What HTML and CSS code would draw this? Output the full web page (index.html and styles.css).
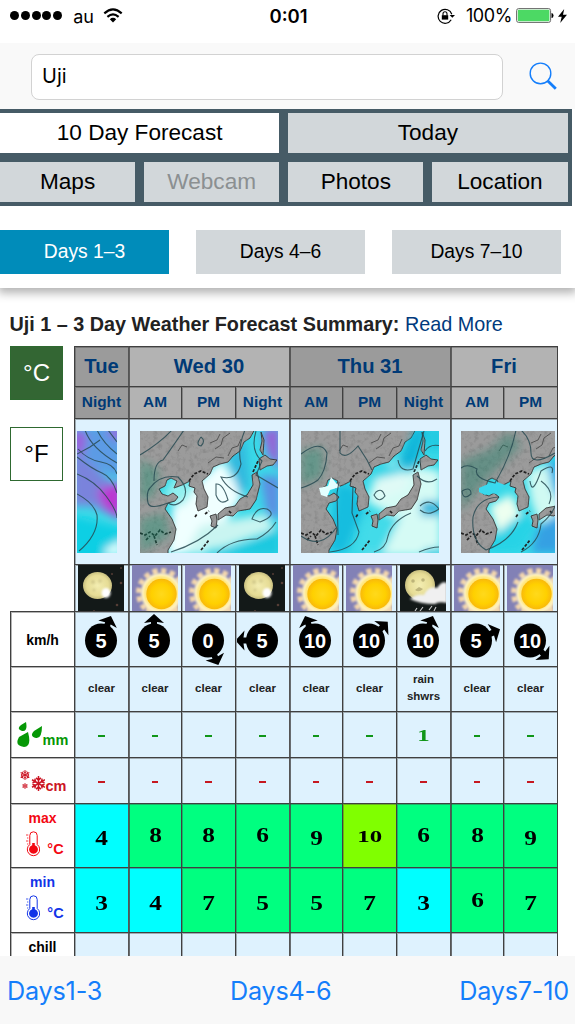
FILE: index.html
```html
<!DOCTYPE html>
<html lang="en">
<head>
<meta charset="utf-8">
<title>Uji weather forecast</title>
<link rel="stylesheet" href="styles.css">
</head>
<body>
<svg class="defs" width="0" height="0">
  <defs>
    <filter id="soft" x="-30%" y="-30%" width="160%" height="160%"><feGaussianBlur stdDeviation="4"/></filter>
    <filter id="edge" x="-30%" y="-30%" width="160%" height="160%"><feGaussianBlur stdDeviation="1.3"/></filter>
    <filter id="rough" x="0" y="0" width="100%" height="100%">
      <feTurbulence type="fractalNoise" baseFrequency=".22" numOctaves="4" seed="4"/>
      <feColorMatrix values="0 0 0 0 .2  0 0 0 0 .2  0 0 0 0 .2  1.5 0 0 0 -.68"/>
      <feComposite in2="SourceGraphic" operator="in" result="n"/>
      <feMerge><feMergeNode in="SourceGraphic"/><feMergeNode in="n"/></feMerge>
    </filter>
    <radialGradient id="sunfill"><stop offset="0" stop-color="#ffd91c"/><stop offset=".65" stop-color="#ffd000"/><stop offset="1" stop-color="#f9b90b"/></radialGradient>
    <radialGradient id="moonfill"><stop offset="0" stop-color="#f3edb1"/><stop offset=".75" stop-color="#e6dc95"/><stop offset="1" stop-color="#c8bf80"/></radialGradient>
    <symbol id="land" viewBox="0 0 138 122">
      <g fill="#9b9b9b" stroke="#303030" stroke-width=".9" filter="url(#rough)">
        <path d="M-2-2H115L110 7 104 11 100 20 93 25 88 31 80 33 73 36 70 43 62 50 64 58 68 66 67 76 58 80 56 73 57 65 54 61 55 57 49 55 50 50 42 54 34 57 37 50 31 47 27 49 25 55 19 58 22 63 28 65 33 62 38 66 35 70 28 72 25 78 32 88 36 98 34 109 28 119 28 124H-2Z"/>
        <path d="M70 85 76 83 77 89 76 97 71 95 72 90ZM78 83 85 77 95 75 100 68 107 64 113 54 112 44 117 41 120 53 116 69 110 78 98 80 93 85 86 84 78 89ZM119 28 125 24 130 28 137 29 133 34 127 35 120 39ZM121 1 124 9 123 24 120 19 122 10Z"/>
      </g>
      <path d="M0 102 5 104 10 101 15 105 20 99 25 103 31 101M14 105 17 114M6 109 10 105M61 119 65 114 69 109M55 86 57 83M65 83 69 80M89 80 92 83M113 41 118 30M49 50 54 43 61 40 68 43" fill="none" stroke="#222" stroke-width="1.7" stroke-dasharray="3 1.5"/>
      <path d="M75 18 81 14 83 7 90 2M88 25 92 17 98 15 101 8M70 12 77 9 80 3M68 32 76 26 84 27M38 20 42 14 47 16" fill="none" stroke="#555" stroke-width="1"/>
    </symbol>
    <symbol id="sun" viewBox="0 0 46 47">
      <path d="M0 0H46V47H0Z" fill="#8281b6"/>
      <path d="M14 47V36H36L46 14V47Z" fill="#efd7ac" filter="url(#edge)"/>
      <circle cx="29" cy="28" r="22" fill="none" stroke="#f3d6ae" stroke-width="6" stroke-dasharray="5 3.6" filter="url(#edge)"/>
      <circle cx="29" cy="28" r="20" fill="#fff3c4" filter="url(#edge)"/>
      <circle cx="29" cy="28" r="17" fill="#ffe678" filter="url(#edge)"/>
      <circle cx="29.5" cy="29" r="15.2" fill="url(#sunfill)"/>
    </symbol>
    <symbol id="moon" viewBox="0 0 46 47">
      <path d="M0 0H46V47H0Z" fill="#131918"/>
      <ellipse cx="19.5" cy="20.5" rx="14.5" ry="13.5" fill="url(#moonfill)"/>
      <ellipse cx="28" cy="28" rx="4.5" ry="5" fill="#fff" filter="url(#edge)"/>
      <g fill="#b8ae75" opacity=".5" filter="url(#edge)"><circle cx="15" cy="17" r="2"/><circle cx="22" cy="16" r="1.8"/><circle cx="16" cy="25" r="1.6"/></g>
      <g fill="#65463d" opacity=".8"><circle cx="34" cy="9" r="1"/><circle cx="43" cy="18" r="1.3"/><circle cx="39" cy="40" r="1.3"/><circle cx="16" cy="46" r="1"/><circle cx="43" cy="3" r="1"/></g>
    </symbol>
    <symbol id="moonrain" viewBox="0 0 46 47">
      <path d="M0 0H46V47H0Z" fill="#131918"/>
      <circle cx="20" cy="20" r="15" fill="url(#moonfill)"/>
      <g fill="#aaa16a" opacity=".7"><circle cx="13" cy="16" r="1.8"/><circle cx="23" cy="15" r="1.8"/><path d="M15 25Q19 28 23 24L19 22Z"/></g>
      <path d="M10 34Q16 29 24 30 29 20 37 23 42 15 47 18V38Q38 36 35 39 20 39 10 34Z" fill="#f0f0f0" filter="url(#edge)"/>
      <path d="M17 43 15 46M23 42 20 46M32 41 29 45M36 42 34 46" stroke="#ccc" stroke-width="1.1"/>
    </symbol>
    <symbol id="flake" viewBox="0 0 20 20"><g fill="none" stroke="currentColor" stroke-width="2"><g id="arm"><path d="M10 10V0M6.8 2.5 10 5.5 13.2 2.5"/></g><use href="#arm" transform="rotate(60 10 10)"/><use href="#arm" transform="rotate(120 10 10)"/><use href="#arm" transform="rotate(180 10 10)"/><use href="#arm" transform="rotate(240 10 10)"/><use href="#arm" transform="rotate(300 10 10)"/></g></symbol>
    <symbol id="thermo" viewBox="0 0 14 26"><g fill="none" stroke="currentColor"><path d="M3.8 13.5V4.5a3.7 3.7 0 0 1 7.4 0v9a6.2 6.2 0 1 1-7.4 0Z"/><path d="M0 4H2.3M1 7H2.3M0 10H2.3M1 13H2.3" stroke-width=".8"/></g><path d="M6.2 12h2.6v2.2a4.4 4.4 0 1 1-2.6 0Z" fill="currentColor"/></symbol>
  </defs>
</svg>

<header class="status">
  <div class="status-side">
    <span class="signal"><i></i><i></i><i></i><i></i><i></i></span>
    <span class="carrier">au</span>
    <svg class="wifi" width="20" height="15" viewBox="0 0 20 15"><g fill="none" stroke="#000" stroke-width="2.1"><path d="M1.3 5.4Q10-2.5 18.7 5.4M4.4 8.9Q10 3.9 15.6 8.9"/></g><path d="M6.8 11.2Q10 8.4 13.2 11.2L10 14.5Z"/></svg>
  </div>
  <span class="clock">0:01</span>
  <div class="status-side status-right">
    <svg width="18" height="16" viewBox="0 0 18 16"><path d="M14.2 11.8A7 7 0 1 1 14.8 6.2" fill="none" stroke="#000" stroke-width="1.2"/><path d="M12.6 7H18L15.3 9.8Z"/><path d="M4.8 7.2h6.4v4.4H4.8Z"/><path d="M6 7.6V5.8a2 2 0 0 1 4 0v1.8" fill="none" stroke="#000" stroke-width="1.1"/></svg>
    <span class="percent">100%</span>
    <svg class="battery" width="38" height="15" viewBox="0 0 38 15"><rect x=".6" y=".6" width="34" height="13.8" rx="2" fill="#fff" stroke="#666"/><rect x="1.8" y="1.8" width="31.6" height="11.4" rx=".8" fill="#4cd964"/><path d="M35.5 5q2 0 2 2.5t-2 2.5Z"/></svg>
    <svg width="9" height="14" viewBox="0 0 9 14"><path d="M6.2 0 0 7.8H3.7L2.2 14 9 5.8H5Z"/></svg>
  </div>
</header>

<div class="searchbar">
  <div class="search-field">Uji</div>
  <svg width="28" height="28" viewBox="0 0 28 28" fill="none" stroke="#147efb"><circle cx="11.5" cy="11.4" r="10.3" stroke-width="1.4"/><path d="M18.6 18.8 26.8 26.8" stroke-width="2.8"/></svg>
</div>

<main class="page">
  <nav class="tabs">
    <a class="wide active">10 Day Forecast</a><a class="wide">Today</a>
    <a>Maps</a><a class="off">Webcam</a><a>Photos</a><a>Location</a>
  </nav>
  <nav class="ranges"><a class="active">Days 1–3</a><a>Days 4–6</a><a>Days 7–10</a></nav>
  <h1 class="summary"><b>Uji 1 – 3 Day Weather Forecast Summary:</b> <a>Read More</a></h1>
  <section class="forecast" id="forecast">
    <div class="units"><span class="unit on">°C</span><span class="unit">°F</span></div>
  </section>
</main>

<footer class="toolbar"><a>Days1-3</a><a>Days4-6</a><a>Days7-10</a></footer>
<script src="forecast.js"></script>
</body>
</html>
```
FILE: styles.css
```css
* { box-sizing: border-box; }
body { margin: 0; height: 1024px; display: flex; flex-direction: column; overflow: hidden; background: #fff; color: #000; font-family: "Liberation Sans", Arial, sans-serif; }
.defs { position: absolute; }
svg { display: block; flex: none; }

.status { height: 43px; display: flex; align-items: center; padding: 0 8px 12px 10px; font: 18.5px Inter, sans-serif; }
.status-side { flex: 1; display: flex; align-items: center; }
.status-right { justify-content: flex-end; }
.signal { display: flex; gap: 1.8px; }
.signal i { width: 9px; height: 9px; border-radius: 50%; background: #000; }
.carrier { margin: 1px 9px 0 11px; font-size: 18px; }
.clock { font-weight: 600; font-size: 18.5px; }
.percent { margin: 0 4px 0 11px; font-size: 18px; letter-spacing: -.4px; }
.battery { margin-right: 4px; }

.searchbar { height: 66px; flex: none; display: flex; align-items: center; gap: 26px; padding: 0 18px 0 31px; background: #f9f9f9; }
.search-field { flex: none; width: 472px; height: 46px; margin-top: 2px; padding-left: 10px; border: 1px solid #d2d2d2; border-radius: 8px; background: #fff; font: 20px/43px Inter, sans-serif; }

.page { flex: 1; min-height: 0; overflow: hidden; }
.tabs { width: 572px; height: 97px; display: grid; grid-template-columns: repeat(4, 1fr); grid-template-rows: 40px 40px; gap: 9px; padding: 4px 4.5px 4px 0; background: #465b66; font-size: 22.6px; }
.tabs a { display: flex; align-items: center; justify-content: center; background: #d2d7da; }
.tabs .wide { grid-column: span 2; }
.tabs .active { background: #fff; }
.tabs .off { color: #8b8f91; }
.ranges { height: 82px; display: grid; grid-template-columns: repeat(3, 169px); gap: 27px; padding: 24px 0 14px; position: relative; box-shadow: 0 3px 9px 2px rgba(0,0,0,.3); clip-path: inset(0 0 -20px 0); background: #fff; font-size: 19.3px; }
.ranges a { display: flex; align-items: center; justify-content: center; background: #d2d7da; }
.ranges .active { background: #008cba; color: #fff; }
.summary { margin: 0; padding: 24px 0 0 9.5px; height: 58px; font-size: 19.8px; line-height: 24px; font-weight: 400; color: #222; white-space: nowrap; }
.summary a { color: #003a7d; }

.forecast { display: grid; margin-left: 10px; width: 548px; grid-template-columns: 64px 54px 53px 54px 54px 53px 54px 54px 53px 55px; grid-template-rows: 40px 32px 146px 47px 55px 45px 46px 46px 64px 65px 64px; }
.units { grid-area: 1 / 1 / 5 / 2; display: flex; flex-direction: column; gap: 27px; }
.unit { width: 53px; height: 54px; border: 1px solid #2e6930; display: flex; align-items: center; justify-content: center; font-size: 24px; }
.unit.on { background: #336633; color: #fff; }
.cell { border-top: 1px solid #404040; border-left: 1px solid #404040; box-shadow: inset 1px 1px rgba(64,64,64,.4); display: flex; align-items: center; justify-content: center; background: #def2fe; overflow: hidden; min-width: 0; }
.cell.last { border-right: 1px solid #404040; }
.cell.group { border-left-color: #555; box-shadow: inset 1px 0 rgba(64,64,64,.75), inset 0 1px rgba(64,64,64,.4); }
.day, .period { background: #b3b3b3; color: #003a76; font-weight: 700; font-size: 20.2px; }
.day.dark, .period.dark { background: #9b9b9b; }
.period { font-size: 15.4px; padding-bottom: 2px; }
.label { background: #fff; font-weight: 700; font-size: 14px; padding-top: 1px; }
.map { padding-bottom: 0; }
.map.left { justify-content: flex-start; padding-left: 2px; }
.map.right { justify-content: flex-end; padding-right: 2px; }
.sky { justify-content: flex-start; align-items: flex-start; padding-left: 3px; }
.text { font-weight: 700; font-size: 11.5px; line-height: 17px; text-align: center; padding-bottom: 2px; color: #222; }
.rain { color: #109618; }
.snow { color: #c61820; }
.dash { width: 6.5px; height: 2px; background: currentColor; margin-top: 3px; }
.number { font: 700 22px "Liberation Serif", serif; }
.number span { transform: scaleX(1.15); margin-bottom: 1px; }
.number .low { margin-top: 6px; }
.number .small { font-size: 17.5px; transform: scaleX(1.42); margin-top: 3px; }
.warm { background: #00ff80; }
.cool { background: #00ffff; }
.hot { background: #80ff00; }
.precip { gap: 1px; align-items: center; }
.precip span { font-size: 14.5px; margin-top: 10px; }
.temp { flex-direction: column; justify-content: flex-start; padding-top: 6px; }
.temp div { display: flex; align-items: center; gap: 7px; margin: 5px 0 0 5px; }
.temp div span { font-size: 14.5px; padding-top: 10px; }
.red { color: #f30812; }
.blue { color: #1234e8; }
.crimson { color: #cc1625; }
.green { color: #069806; }
.chill { align-items: flex-start; padding-top: 6px; }

.toolbar { height: 68px; flex: none; display: flex; justify-content: space-between; align-items: center; padding: 2px 6px 0 7px; background: #f8f8f8; color: #147efb; font: 25.2px Inter, sans-serif; letter-spacing: -.2px; }
```
FILE: forecast.js
```js
const root = document.getElementById('forecast');

function add(row, col, cls, html = '', span = 1) {
  const el = document.createElement('div');
  const edge = [3, 6, 9].includes(col) ? ' group' : '';
  el.className = 'cell ' + cls + edge + (col + span - 1 === 10 ? ' last' : '');
  el.style.gridArea = `${row} / ${col} / ${row + 1} / ${col + span}`;
  el.innerHTML = html;
  root.append(el);
}

add(1, 2, 'day dark', 'Tue');
add(1, 3, 'day', 'Wed 30', 3);
add(1, 6, 'day dark', 'Thu 31', 3);
add(1, 9, 'day', 'Fri', 2);
['Night', 'AM', 'PM', 'Night', 'AM', 'PM', 'Night', 'AM', 'PM'].forEach((p, i) =>
  add(2, i + 2, 'period' + (i === 0 || (i > 3 && i < 7) ? ' dark' : ''), p));

const chart = (width, sea, land, lines) => `<svg width="${width}" height="122" viewBox="0 0 ${width} 122">
  <path d="M0 0H138V122H0Z" fill="#39d9e8"/><g filter="url(#soft)">${sea}</g>${land}
  <g fill="none" stroke="#274a52" stroke-width="1.1" opacity=".85">${lines}</g></svg>`;
const ground = tint => `<use href="#land" width="138" height="122"/><g filter="url(#soft)" opacity=".4">${tint}</g>`;

add(3, 2, 'map left', chart(40,
  '<path d="M0-5H45V48L0 30Z" fill="#5c9be5"/><path d="M-5 20 10 30 45 60V90L15 75-5 75Z" fill="#7a83dc"/><path d="M20 60 45 50V88L28 78Z" fill="#bb38d2"/><path d="M-5-5 10 5 6 25-5 20ZM28 0 45-5V12Z" fill="#9c5ddc"/><path d="M-10 82 10 88 50 98V110L20 130H-10Z" fill="#10cfe4"/><path d="M28 118 45 108V125H28Z" fill="#dff"/>', '',
  '<path d="M8-1Q14 17 40 32M0 23 13 16 23 9M20-1Q26 12 40 23M31-1 40 11M0 26Q15 38 25 42T40 62M1 18Q11 29 24 31T40 43M0 43Q18 50 29 65T40 87M0 63Q17 72 20 84 22 103 2 120"/>'));

add(3, 3, 'map', chart(138,
  '<path d="M26 125 33 75 82 28 103 65 65 122Z" fill="#f0ffff"/><path d="M122 0 140-5V40L128 25Z" fill="#9565d6"/><path d="M88 30 105 5 110 55 100 65Z" fill="#31b9de"/><path d="M120 45H140V88L127 84Z" fill="#5c8fe2"/><path d="M85 90 125 83 135 98 85 116 45 122 60 95Z" fill="#c9f5f1"/><path d="M38 40 54 60 42 75 22 66Z" fill="#92f0ef"/><path d="M110 112 140 95V125H60Z" fill="#1fc9e0"/>',
  ground('<path d="M0 28 20 40 14 65 0 70ZM0 88 25 82 30 105 0 122Z" fill="#189271"/>'),
  '<path d="M44-1Q31 18 23 29 14 31 14 50M32-1Q20 12 0 24M61 6Q55 14 61 15 66 10 61 6M105-1Q97 18 101 33 97 50 81 46 88 60 108 66M116 0Q110 20 122 30L116 44 138 57M10 57Q20 43 38 46 50 58 43 69 35 77 28 72 10 79 8 72 6 61 10 57M76 53Q83 52 88 69 80 75 76 64ZM112 88Q117 75 127 78 138 84 120 91ZM31 121Q60 112 78 94M77 122Q91 108 117 108 130 101 136 91"/>'), 3);

add(3, 6, 'map', chart(138,
  '<path d="M75 45 90 30 140 40V125H65L92 85 65 70Z" fill="#d5fbf5"/><path d="M97 35 115-5 124 0 112 40Z" fill="#14add5"/><path d="M76 50 108 38 105 58 75 70Z" fill="#e0faf6"/><path d="M35 52 55 55 62 80 45 122 27 122Z" fill="#14bddf"/><path d="M65 50 85 35 105 32 100 42Z" fill="#2bd3e6"/><path d="M64 88 100 85 80 125 55 122Z" fill="#43dbe9"/><path d="M120 70H140V85H120Z" fill="#25b6dd"/><path d="M125-5H145V20H125ZM125 118H140V125H120Z" fill="#22cbe2"/>',
  ground('<path d="M0 20 22 16 22 45 0 55Z" fill="#138f72"/><path d="M100 42 112-5 124 2 110 42Z" fill="#06c0df"/>') + '<path d="m18 57 9-2 3-9 5 6 4 4-10 3-3 7-6-2Z" fill="#e3ffff"/>',
  '<path d="M39-1 39 22Q45 29 57 15L66 29 71 39M0 23Q20 8 26 22 25 40 17 49 10 54 0 57M97 29Q99 42 112 38 120 10 123 0M124 20Q129 12 140 15M75 61Q81 56 84 65 78 73 73 64ZM116 45Q126 55 136 48M38 51 36 62 37 104M52 55 51 82 58 101Q55 118 29 121M73 121Q85 118 87 105 91 90 110 82M119 75Q129 66 138 78 127 86 119 79M118 121Q130 116 138 116M0 105Q20 119 35 97"/>'), 3);

add(3, 9, 'map right', chart(94,
  '<path d="M65 40 100 30V85L78 92 70 70Z" fill="#d0faf3"/><path d="M28 75 50 63 60 82 39 112Z" fill="#edfff0"/><path d="M76 98 100 80V122H70Z" fill="#35a0e3"/><path d="M26 110 60 83 77 90 60 120 28 122Z" fill="#26d3e6"/><path d="M86 30H105V80L92 60Z" fill="#18ace6"/>',
  ground('<path d="M0 30 30 18 48 0 60 15 26 48 0 80Z" fill="#137f68"/>') + '<path d="m18 57 9-4 9-2 8 3-8 9-8-1-4 2-6-3Z" fill="#39d9ee"/>',
  '<path d="M55-1Q50 25 34 52 12 47 16 38 6 32 0 37M60-1Q70 8 70 22T94 22M69 50Q71 66 80 40 94 31 91 42M80 50Q94 60 88 73M38 66Q16 67 12 86 10 110 25 119 50 110 57 91M60 121Q78 112 80 93 91 84 94 75M1 60Q10 55 10 63 2 70 1 60"/>'), 2);

['moon', 'sun', 'sun', 'moon', 'sun', 'sun', 'moonrain', 'sun', 'sun'].forEach((s, i) =>
  add(4, i + 2, 'sky', `<svg width="46" height="47"><use href="#${s}" width="46" height="47"/></svg>`));

add(5, 1, 'label', 'km/h');
[[5, 22], [5, 0], [0, 157], [5, 270], [10, -22], [10, 45], [10, 22], [5, 65], [10, 135]].forEach(([speed, angle], i) =>
  add(5, i + 2, 'wind', `<svg width="52" height="54" viewBox="-25 -28.5 52 54"><ellipse rx="16" ry="17"/><path d="M0-26.5 10-17.5 3-18.5V-13H-3V-18.5L-10-17.5Z" transform="rotate(${angle})"/><text y="7.5" text-anchor="middle" fill="#fff" font-family="Liberation Sans" font-size="20" font-weight="700">${speed}</text></svg>`));

add(6, 1, 'label');
for (let i = 0; i < 9; i++) add(6, i + 2, 'text', i === 6 ? 'rain<br>shwrs' : 'clear');

add(7, 1, 'label precip green', '<svg width="25" height="26" viewBox="0 0 25 26" fill="currentColor"><path d="M9 0Q11 10 5 9-1 7 4 3ZM25 4Q25 17 19 16 12 14 17 9ZM11 10Q15 25 7 25-3 24 2 15ZM"/></svg><span>mm</span>');
add(8, 1, 'label precip crimson', '<svg width="26" height="24" viewBox="0 0 26 24"><use href="#flake" x="1" y="1" width="10" height="10"/><use href="#flake" x="3" y="14" width="6" height="6"/><use href="#flake" x="12" y="7" width="15" height="15"/></svg><span>cm</span>');
for (let i = 0; i < 9; i++) {
  add(7, i + 2, 'number rain', i === 6 ? '<span class="small">1</span>' : '<i class="dash"></i>');
  add(8, i + 2, 'number snow', '<i class="dash"></i>');
}

const temperatures = [[4, 8, 8, 6, 9, 10, 6, 8, 9], [3, 4, 7, 5, 5, 7, 3, 6, 7]];
['max', 'min'].forEach((name, r) => {
  add(9 + r, 1, `label temp ${r ? 'blue' : 'red'}`, `${name}<div><svg width="14" height="26"><use href="#thermo" width="14" height="26"/></svg><span>°C</span></div>`);
  temperatures[r].forEach((t, i) => {
    const tone = t < 5 ? 'cool' : t > 9 ? 'hot' : 'warm';
    const drop = t > 9 ? 'small' : [3, 4, 5, 7, 9].includes(t) ? 'low' : '';
    add(9 + r, i + 2, `number ${tone}`, `<span class="${drop}">${t}</span>`);
  });
});
add(11, 1, 'label chill', 'chill');
for (let i = 0; i < 9; i++) add(11, i + 2, 'number');
```
